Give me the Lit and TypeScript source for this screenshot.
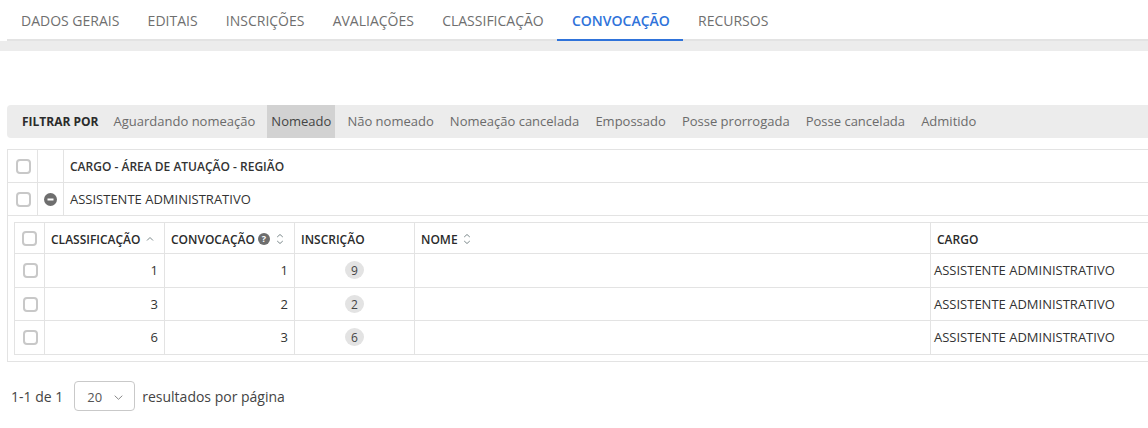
import { LitElement, html, css, svg } from "lit";
import { customElement } from "lit/decorators.js";

const tabs = ["DADOS GERAIS", "EDITAIS", "INSCRIÇÕES", "AVALIAÇÕES", "CLASSIFICAÇÃO", "CONVOCAÇÃO", "RECURSOS"];
const filters = ["Aguardando nomeação", "Nomeado", "Não nomeado", "Nomeação cancelada", "Empossado", "Posse prorrogada", "Posse cancelada", "Admitido"];
const rows = [
  [1, 1, 9],
  [3, 2, 2],
  [6, 3, 6],
];

const sortIcon = svg`<svg class="sort" width="8" height="12" viewBox="0 0 8 12" fill="none" stroke="#7d8a8c" stroke-width="1"><path d="M1.2 4 4 1.5 6.8 4M1.2 8 4 10.5 6.8 8"/></svg>`;

@customElement("app-root")
export class AppRoot extends LitElement {
  static styles = css`
    :host { display: block; width: 1148px; height: 428px; overflow: hidden; background: #fff; font-family: "Open Sans", sans-serif; color: #333; }
    .tabs { display: flex; margin-left: 7px; height: 41px; border-bottom: 2px solid #e3e3e3; box-sizing: border-box; }
    .tab { padding: 0 14.1px; height: 41px; box-sizing: border-box; font-size: 14px; line-height: 41px; color: #6f6f6f; white-space: nowrap; }
    .tab:first-child { padding-left: 14px; }
    .tab.active { color: #2f73da; font-weight: 600; border-bottom: 2px solid #2f73da; margin: 0 0.6px 0 -0.6px; padding: 0 13.5px 0 14.7px; }
    .band { height: 10px; background: #ececec; }
    .filter { display: flex; align-items: center; height: 33px; margin: 54px 0 0 7px; padding-left: 15px; background: #ececec; border-radius: 4px 0 0 4px; font-size: 13px; color: #6b6b6b; white-space: nowrap; }
    .filter b { font-size: 12px; font-weight: 700; color: #2b2b2b; margin-right: 11px; }
    .f { padding: 0 4px; margin-right: 8.1px; height: 33px; line-height: 33px; }
    .f.on { background: #d2d2d2; color: #444; }
    .outer { margin: 11px 0 0 7px; width: 1141px; border: 1px solid #e3e3e3; border-right: 0; box-sizing: border-box; height: 213px; }
    .orow { display: grid; grid-template-columns: 30px 26px 1fr; height: 33px; border-bottom: 1px solid #e3e3e3; box-sizing: border-box; font-size: 13px; color: #333; }
    .orow > div { display: flex; align-items: center; }
    .orow > div:not(:last-child) { border-right: 1px solid #e3e3e3; justify-content: center; }
    .orow > div:last-child { padding-left: 6px; }
    .orow.h > div:last-child { font-size: 12px; font-weight: 600; }
    .cb { width: 15px; height: 15px; border: 2px solid #c8c8c8; border-radius: 4px; background: #fff; display: block; box-sizing: border-box; }
    .orow .cb, .irow.d .cb { margin-left: 1px; }
    .inner { margin: 6px 0 0 6px; border: 1px solid #e3e3e3; border-right: 0; width: 1134px; box-sizing: border-box; }
    .irow { display: grid; grid-template-columns: 30px 120px 130px 120px 516px 1fr; height: 33px; border-bottom: 1px solid #e3e3e3; box-sizing: border-box; font-size: 13px; }
    .irow:nth-child(2) { height: 34px; }
    .irow:last-child { border-bottom: 0; }
    .irow.h { height: 31px; font-size: 12px; font-weight: 600; color: #2b2b2b; }
    .irow > div { display: flex; align-items: center; white-space: nowrap; border-right: 1px solid #e3e3e3; box-sizing: border-box; padding: 0 6px; }
    .irow.h > div { padding-top: 2px; }
    .irow > div:first-child { justify-content: center; padding: 0; }
    .irow > div:last-child { border-right: 0; padding-left: 3px; }
    .irow.h > div:last-child { padding-left: 6px; }
    .irow:nth-child(2) > div, .irow:last-child > div { padding-bottom: 1px; }
    .num { justify-content: flex-end; padding-right: 6px !important; }
    .ctr { justify-content: center; }
    .pill { width: 19px; height: 18px; border-radius: 50%; background: #e3e3e3; display: flex; align-items: center; justify-content: center; font-size: 12px; color: #444; }
    .sort { margin-left: 5px; flex: none; }
    .q { margin-left: 3px; flex: none; }
    .q + .sort { margin-left: 6px; }
    .pager { display: flex; align-items: center; margin: 19px 0 0 11px; font-size: 14px; color: #444; height: 30px; }
    .sel { width: 61px; height: 30px; margin: 0 7px 0 11px; border: 1px solid #c9c9c9; border-radius: 4px; box-sizing: border-box; display: flex; align-items: center; justify-content: space-between; padding: 2px 11px 0 12px; font-size: 13px; color: #555; }
  `;

  render() {
    return html`
      <div class="tabs">${tabs.map((t) => html`<div class="tab ${t === "CONVOCAÇÃO" ? "active" : ""}">${t}</div>`)}</div>
      <div class="band"></div>
      <div class="filter">
        <b>FILTRAR POR</b>
        ${filters.map((f) => html`<div class="f ${f === "Nomeado" ? "on" : ""}">${f}</div>`)}
      </div>
      <div class="outer">
        <div class="orow h">
          <div><span class="cb"></span></div><div></div><div>CARGO - ÁREA DE ATUAÇÃO - REGIÃO</div>
        </div>
        <div class="orow">
          <div><span class="cb"></span></div>
          <div><svg width="13" height="13" viewBox="0 0 13 13"><circle cx="6.5" cy="6.5" r="6.5" fill="#6e6e6e"/><rect x="3.5" y="5.5" width="6" height="2" fill="#fff"/></svg></div>
          <div>ASSISTENTE ADMINISTRATIVO</div>
        </div>
        <div class="inner">
          <div class="irow h">
            <div><span class="cb"></span></div>
            <div>CLASSIFICAÇÃO<svg class="sort" width="8" height="12" viewBox="0 0 8 12" fill="none" stroke="#7d8a8c"><path d="M1 7.5 4 4.5l3 3"/></svg></div>
            <div>CONVOCAÇÃO<svg class="q" width="12" height="12" viewBox="0 0 12 12"><circle cx="6" cy="6" r="6" fill="#6e6e6e"/><text x="6" y="9.2" font-size="9" font-weight="700" fill="#fff" text-anchor="middle" font-family="Open Sans">?</text></svg>${sortIcon}</div>
            <div>INSCRIÇÃO</div>
            <div>NOME${sortIcon}</div>
            <div>CARGO</div>
          </div>
          ${rows.map(
            (r) => html`<div class="irow d">
              <div><span class="cb"></span></div>
              <div class="num">${r[0]}</div>
              <div class="num">${r[1]}</div>
              <div class="ctr"><span class="pill">${r[2]}</span></div>
              <div></div>
              <div>ASSISTENTE ADMINISTRATIVO</div>
            </div>`
          )}
        </div>
      </div>
      <div class="pager">
        <span>1-1 de 1</span>
        <div class="sel"><span>20</span><svg width="9" height="5" viewBox="0 0 9 5" fill="none" stroke="#888"><path d="M.7.7l3.8 3.6L8.3.7"/></svg></div>
        <span>resultados por página</span>
      </div>
    `;
  }
}
